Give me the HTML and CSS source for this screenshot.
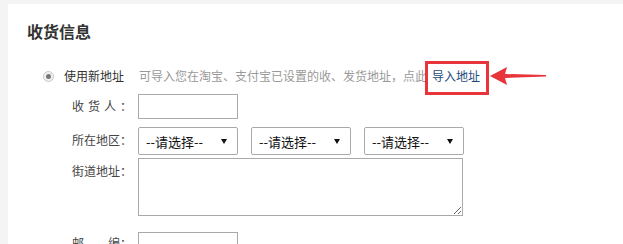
FILE: index.html
```html
<!DOCTYPE html>
<html lang="zh-CN">
<head>
<meta charset="utf-8">
<title>收货信息</title>
<link rel="stylesheet" href="styles.css">
</head>
<body>
<div class="panel">
  <h2 class="title">收货信息</h2>
  <div class="form">
    <div class="choose">
      <span class="radio"><span class="radio-dot"></span></span>
      <span class="choose-label">使用新地址</span>
      <span class="hint">可导入您在淘宝、支付宝已设置的收、发货地址，点此</span>
      <span class="import">
        <a class="import-link" href="#">导入地址</a>
        <span class="highlight"></span>
        <svg class="arrow" width="58" height="20" viewBox="0 0 58 20">
          <path d="M0 10 L17 1 L15 8 L56 9 L56 10.5 L15 12 L17 19 Z" fill="#e8343b"/>
        </svg>
      </span>
    </div>
    <div class="row row-name">
      <label class="label"><span>收</span><span>货</span><span>人</span><span>：</span></label>
      <input class="text" type="text">
    </div>
    <div class="row row-area">
      <label class="label">所在地区：</label>
      <div class="selects">
        <div class="select-wrap"><select class="select"><option>--请选择--</option></select><span class="caret"></span></div>
        <div class="select-wrap"><select class="select"><option>--请选择--</option></select><span class="caret"></span></div>
        <div class="select-wrap"><select class="select"><option>--请选择--</option></select><span class="caret"></span></div>
      </div>
    </div>
    <div class="row row-street">
      <label class="label">街道地址：</label>
      <textarea class="area"></textarea>
    </div>
    <div class="row row-zip">
      <label class="label"><span>邮</span><span>编：</span></label>
      <input class="text" type="text">
    </div>
  </div>
</div>
</body>
</html>
```
FILE: styles.css
```css
html, body {
  margin: 0;
  padding: 0;
  background: #f4f4f4;
  font-family: "Noto Sans CJK SC", "Noto Sans", sans-serif;
  font-size: 12px;
  line-height: 16px;
  color: #444;
  overflow: hidden;
}
.panel {
  margin: 4px 0 0 8px;
  background: #fff;
  padding: 19px 0 0 19px;
  height: 221px;
}
.title {
  margin: 0;
  font-size: 16px;
  line-height: 16px;
  font-weight: 700;
  color: #333;
}
.form {
  padding-left: 16px;
}
.choose {
  margin-top: 26px;
  height: 22px;
  display: flex;
  align-items: center;
}
.radio {
  width: 11px;
  height: 11px;
  border-radius: 50%;
  border: 1px solid #c8c8c8;
  background: #f0f0f0;
  display: flex;
  align-items: center;
  justify-content: center;
  box-sizing: border-box;
}
.radio-dot {
  width: 5px;
  height: 5px;
  border-radius: 50%;
  background: #777;
}
.choose-label {
  margin-left: 10px;
  color: #333;
}
.hint {
  margin-left: 15px;
  color: #999;
}
.import {
  position: relative;
  margin-left: 5px;
}
.import-link {
  color: #1d4a7c;
  text-decoration: none;
}
.highlight {
  position: absolute;
  left: -7px;
  top: -7px;
  width: 64px;
  height: 34px;
  border: 3px solid #e8343b;
  box-sizing: border-box;
}
.arrow {
  position: absolute;
  left: 58px;
  top: -2px;
}
.row {
  display: flex;
  align-items: flex-start;
}
.label {
  width: 60px;
  margin-left: 29px;
  margin-right: 6px;
  color: #444;
  display: flex;
  justify-content: space-between;
  white-space: nowrap;
}
.row-name {
  margin-top: 7px;
}
.row-name .label {
  padding-top: 4px;
}
.text {
  width: 100px;
  height: 25px;
  box-sizing: border-box;
  border: 1px solid #aaa;
  margin: 0;
  padding: 0 4px;
  font: inherit;
}
.row-area {
  margin-top: 8px;
}
.row-area .label {
  padding-top: 5px;
}
.selects {
  display: flex;
  gap: 13px;
}
.select-wrap {
  position: relative;
  width: 100px;
  height: 28px;
}
.select {
  appearance: none;
  -webkit-appearance: none;
  width: 100px;
  height: 28px;
  box-sizing: border-box;
  border: 1px solid #a9a9a9;
  border-radius: 2px;
  background: #fff;
  margin: 0;
  padding: 0 0 0 7px;
  font-family: "Noto Sans CJK SC", "Noto Sans", sans-serif;
  font-size: 13px;
  color: #111;
}
.caret {
  position: absolute;
  right: 11px;
  top: 12px;
  width: 0;
  height: 0;
  border-left: 3px solid transparent;
  border-right: 3px solid transparent;
  border-top: 5px solid #111;
  pointer-events: none;
}
.row-street {
  margin-top: 3px;
}
.row-street .label {
  padding-top: 5px;
}
.area {
  width: 325px;
  height: 58px;
  box-sizing: border-box;
  border: 1px solid #aaa;
  margin: 0;
  padding: 2px 4px;
  font: inherit;
}
.row-zip {
  margin-top: 16px;
}
.row-zip .label {
  padding-top: 3px;
}
```
